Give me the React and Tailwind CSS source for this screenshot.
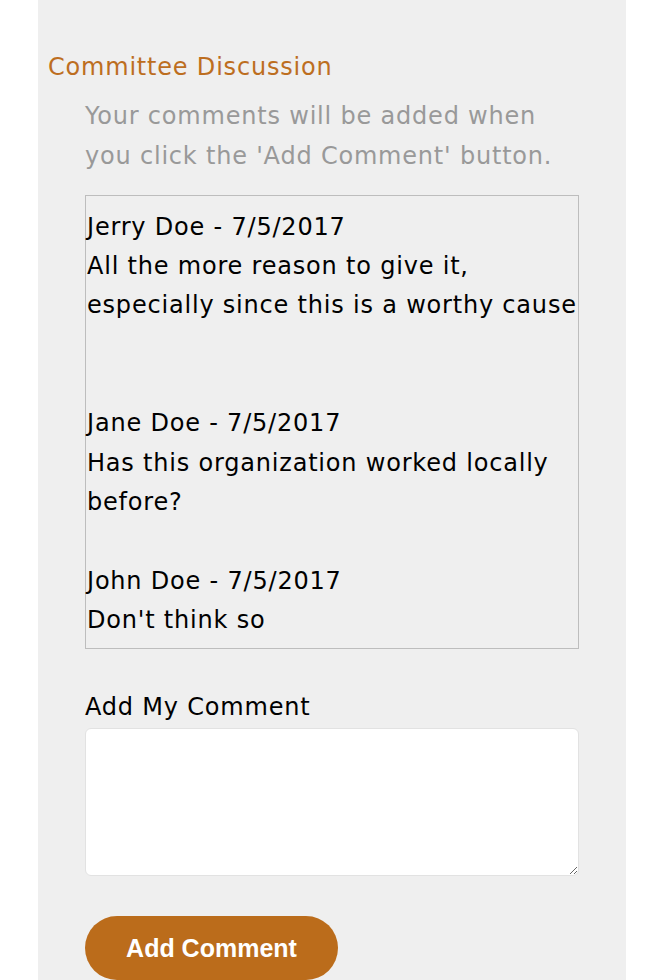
import React from "react";

const comments = [
  { author: "Jerry Doe", date: "7/5/2017", lines: ["All the more reason to give it,", "especially since this is a worthy cause"], gap: 2 },
  { author: "Jane Doe", date: "7/5/2017", lines: ["Has this organization worked locally", "before?"], gap: 1 },
  { author: "John Doe", date: "7/5/2017", lines: ["Don't think so"], gap: 0 },
];

export default function App() {
  return (
    <div className="min-h-screen bg-white font-['DejaVu_Sans',sans-serif] text-[24px] leading-[39.3px] tracking-[0.8px]">
      <div className="ml-[38px] min-h-screen w-[588px] bg-[#efefef] pt-[48px]">
        <h2 className="pl-[10px] text-[#bd6e1f]">Committee Discussion</h2>

        <div className="mt-[10px] pl-[47px]">
          <p className="text-[#999999]">
            Your comments will be added when
            <br />
            you click the 'Add Comment' button.
          </p>

          <div className="mt-[19px] h-[454px] w-[494px] border border-[#bdbdbd] pl-px pt-[12px] text-black">
            {comments.map((c) => (
              <div key={c.author}>
                <div>
                  {c.author} - {c.date}
                </div>
                {c.lines.map((l) => (
                  <div key={l} className="whitespace-nowrap">
                    {l}
                  </div>
                ))}
                {Array.from({ length: c.gap }).map((_, i) => (
                  <div key={i} className="h-[39.3px]" />
                ))}
              </div>
            ))}
          </div>

          <label className="mt-[39px] block text-black">Add My Comment</label>
          <textarea className="mt-px block h-[148px] w-[494px] rounded-[6px] border border-[#e2e2e2] bg-white" />

          <button className="mt-[40px] flex h-[64px] w-[253px] items-center justify-center rounded-full bg-[#bb6c1b] font-['Liberation_Sans',Arial,sans-serif] text-[25px] font-bold tracking-normal text-white">
            Add Comment
          </button>
        </div>
      </div>
    </div>
  );
}
